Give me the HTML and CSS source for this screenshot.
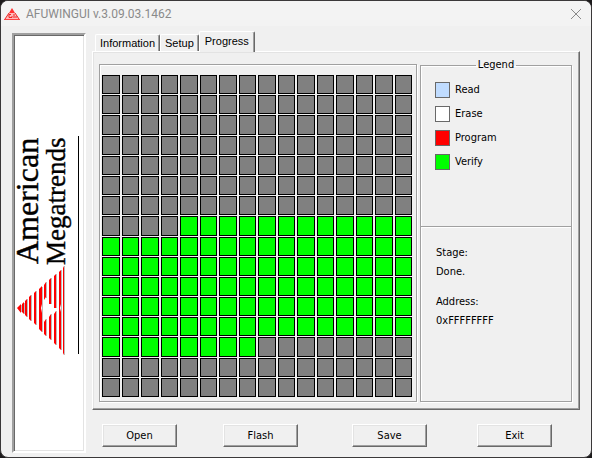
FILE: index.html
```html
<!DOCTYPE html>
<html lang="en">
<head>
  <meta charset="UTF-8">
  <title>AFUWINGUI v.3.09.03.1462</title>
  <link rel="stylesheet" href="styles.css">
</head>
<body>
  <div class="window">
    <header class="titlebar">
      <svg class="app-icon" width="16" height="14" viewBox="0 0 16 14">
        <path d="M8 1 L11 6 H5 Z" fill="#f33"/>
        <path d="M5 6 H11 L15 12 H1 Z" fill="#fbb"/>
        <path d="M5 6 L1 12 M11 6 L15 12 M7 7.5 H5 V10.5 H8 V9 M10 7 V11 M12 9 V11" stroke="#e22" fill="none"/>
        <path d="M0 12.5 H16" stroke="#f44"/>
      </svg>
      <h1>AFUWINGUI v.3.09.03.1462</h1>
      <button class="close" type="button" aria-label="Close">
        <svg width="12" height="12" viewBox="0 0 12 12"><path d="M1 1 L11 11 M11 1 L1 11" stroke="#8a8a8a" fill="none"/></svg>
      </button>
    </header>

    <div class="content">
      <aside class="banner">
        <svg class="logo" width="70" height="222" viewBox="0 0 70 222" role="img" aria-label="American Megatrends">
          <text class="brand brand-top" transform="translate(24 130) rotate(-90)">American</text>
          <text class="brand brand-bottom" transform="translate(51 131) rotate(-90)">Megatrends</text>
          <path fill="#bbb" d="M7 171h1v7h-1zM10 169h1v11h-1zM13 165h1v18h-1zM17 161h1v26h-1zM22 157h1v34h-1zM28 153h1v45h-1zM32 148h1v16h-1zM32 185h1v17h-1zM37 144h1v26h-1zM37 180h1v26h-1zM42 140h1v34h-1zM42 177h1v34h-1zM47 136h1v80h-1zM50 132h1v89h-1z"/>
          <path fill="#f00" d="M3 174l4-4v9zM8 170l2-2v12l-2-2zM11 167l2-2v18l-2-2zM15 163l2-2v26l-2-2zM20 159l2-2v34l-2-2zM25 155l3-3v18l-1 4 1 5v19l-3-3zM30 151l2-3v15l-2 3zM30 188l2-3v17l-2-2zM35 146l2-2v26h-2zM35 183l2-3v26l-2-2zM40 142l2-2v34h-2zM40 180l2-3v34l-2-2zM45 138l2-2v34l-1 4 1 4v38l-2-2zM49 134l1-2v89l-1-2z"/>
          <rect x="64" y="2" width="1" height="218" fill="#000"/>
        </svg>
      </aside>

      <main>
        <div class="tabs" role="tablist">
          <button class="tab" type="button" role="tab">Information</button>
          <button class="tab" type="button" role="tab">Setup</button>
          <button class="tab active" type="button" role="tab" aria-selected="true">Progress</button>
        </div>
        <section class="panel">
          <div class="etched blocks" id="blocks"></div>
          <fieldset class="etched info">
            <legend>Legend</legend>
            <ul class="legend">
              <li><span class="swatch read"></span>Read</li>
              <li><span class="swatch erase"></span>Erase</li>
              <li><span class="swatch program"></span>Program</li>
              <li><span class="swatch verify"></span>Verify</li>
            </ul>
            <dl class="status">
              <dt>Stage:</dt>
              <dd>Done.</dd>
              <dt>Address:</dt>
              <dd>0xFFFFFFFF</dd>
            </dl>
          </fieldset>
        </section>
        <div class="actions">
          <button type="button">Open</button>
          <button type="button">Flash</button>
          <button type="button">Save</button>
          <button type="button">Exit</button>
        </div>
      </main>
    </div>
  </div>

  <script>
    // 16 x 16 flash blocks, verified ones are green
    const blocks = document.getElementById("blocks");
    const firstVerified = 116;
    const lastVerified = 215;
    for (let i = 0; i < 256; i++) {
      const block = document.createElement("span");
      block.className = "block";
      if (i >= firstVerified && i <= lastVerified) {
        block.classList.add("verify");
      }
      blocks.appendChild(block);
    }
  </script>
</body>
</html>
```
FILE: styles.css
```css
* {
  box-sizing: border-box;
}
body {
  margin: 0;
  background: #1c1a1b;
  color: #000;
  font-family: "DejaVu Sans Condensed", "DejaVu Sans", sans-serif;
  font-size: 11px;
  line-height: 14px;
}
button {
  font: inherit;
  color: inherit;
}
.window {
  display: flex;
  flex-direction: column;
  min-height: 100vh;
  background: #f0f0f0;
  border: 1px solid #3a3839;
  border-radius: 8px;
  overflow: hidden;
}
.titlebar {
  display: flex;
  align-items: center;
  height: 25px;
  padding: 0 7px 0 3px;
  background: #f3f3f3;
}
h1 {
  flex: 1;
  margin: 0 0 0 6px;
  font-family: Roboto, "Noto Sans", sans-serif;
  font-size: 12px;
  font-weight: normal;
  color: #8a8a8a;
}
.close {
  display: flex;
  padding: 2px;
  border: none;
  background: none;
}
.content {
  flex: 1;
  display: flex;
  gap: 6px;
  padding: 5px 11px 4px;
}
.banner {
  display: flex;
  align-items: flex-start;
  width: 74px;
  margin-top: 2px;
  padding-top: 99px;
  background: #fff;
  border: 2px solid;
  border-color: #a0a0a0 #fff #fff #a0a0a0;
  box-shadow: inset 1px 1px #696969, inset -1px -1px #e3e3e3;
}
.logo {
  overflow: visible;
}
.brand {
  font-family: "Liberation Serif", serif;
  stroke: #000;
  stroke-width: 0.4;
}
.brand-top {
  font-size: 32px;
}
.brand-bottom {
  font-size: 27px;
}
main {
  flex: 1;
  display: flex;
  flex-direction: column;
}
.tabs {
  display: flex;
  align-items: flex-end;
  height: 20px;
  padding-left: 3px;
}
.tab {
  height: 17px;
  padding: 0 4px;
  background: #f0f0f0;
  border: 1px solid;
  border-color: #fff #696969 transparent #fff;
  border-bottom: none;
  border-radius: 2px 2px 0 0;
  box-shadow: inset -1px 0 #a0a0a0;
  font-family: "Liberation Sans", Arial, sans-serif;
}
.tab.active {
  height: 21px;
  margin-bottom: -1px;
  padding: 0 5px 3px;
  z-index: 1;
}
.panel {
  flex: 1;
  display: grid;
  grid-template-columns: 318fr 152fr;
  gap: 3px;
  padding: 12px 7px 7px 6px;
  border: 1px solid;
  border-color: #fff #696969 #696969 #fff;
  box-shadow: inset -1px -1px #a0a0a0, inset 1px 1px #e3e3e3;
}
.etched {
  border: 1px solid #a0a0a0;
  box-shadow: inset 1px 1px #fff, 1px 1px #fff;
}
.blocks {
  display: grid;
  grid-template-columns: repeat(16, 1fr);
  grid-template-rows: repeat(16, 1fr);
  gap: 1px 2px;
  padding: 10px 4px 4px 2px;
}
.block {
  background: #808080;
  border: 1px solid #000;
}
.block.verify {
  background: #0f0;
}
.info {
  min-width: 0;
  margin: -6px 0 0;
  padding: 0;
}
legend {
  margin: 0 auto;
  padding: 0 2px;
}
.legend {
  height: 155px;
  margin: 0;
  padding: 10px 14px 0;
  list-style: none;
  border-bottom: 1px solid #a0a0a0;
  box-shadow: 0 1px #fff;
}
.legend li {
  display: flex;
  align-items: center;
  gap: 5px;
  margin-bottom: 8px;
}
.swatch {
  width: 15px;
  height: 16px;
  border: 1px solid #696969;
}
.read {
  background: #c0dcff;
}
.erase {
  background: #fff;
}
.program {
  background: #f00;
}
.verify {
  background: #0f0;
}
.status {
  margin: 0;
  padding: 19px 15px;
}
.status dt {
  margin-bottom: 5px;
}
.status dd {
  margin: 0 0 16px;
}
.actions {
  display: grid;
  grid-template-columns: 121fr 129fr 125fr 75fr;
  padding: 14px 28px 6px 10px;
}
.actions button {
  width: 75px;
  height: 23px;
  padding: 0;
  background: #f0f0f0;
  border: 1px solid;
  border-color: #fff #696969 #696969 #fff;
  box-shadow: inset -1px -1px #a0a0a0, inset 1px 1px #e3e3e3;
}
```
